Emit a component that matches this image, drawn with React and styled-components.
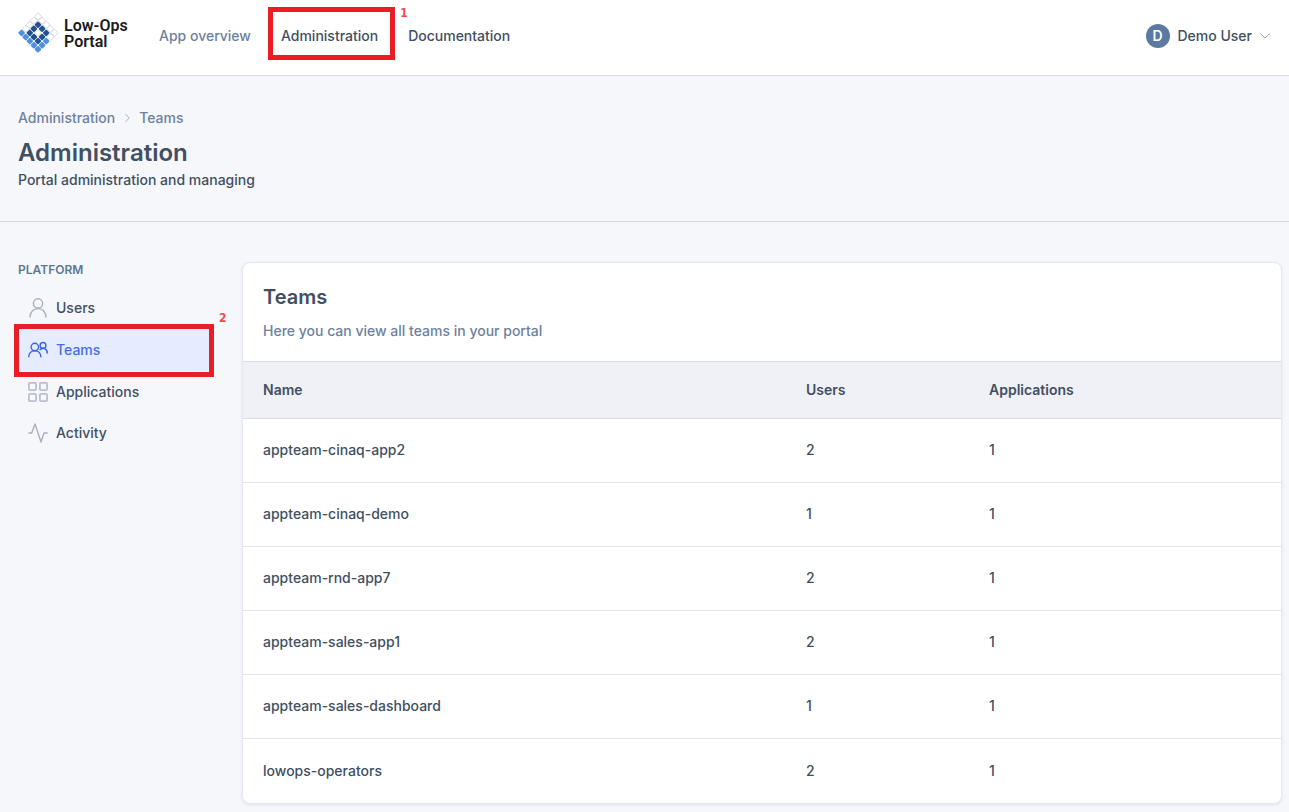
import styled, { createGlobalStyle } from 'styled-components';

const GlobalStyle = createGlobalStyle`
  * {
    box-sizing: border-box;
  }

  body {
    margin: 0;
    background: #f6f7fb;
    color: #414f62;
    font-family: Inter, "Liberation Sans", sans-serif;
    font-size: 14px;
    font-weight: 500;
    line-height: 20px;
  }

  a {
    color: inherit;
    text-decoration: none;
  }
`;

const Header = styled.header`
  display: flex;
  align-items: center;
  height: 76px;
  padding: 0 19px 4px 18px;
  background: #fff;
  border-bottom: 1px solid #d9dce6;
`;

const Brand = styled.a`
  display: flex;
  align-items: center;
  gap: 6px;
  width: 141px;
  padding-bottom: 4px;
  color: #1b1b1d;
  font-family: Roboto, "Liberation Sans", sans-serif;
  font-size: 16px;
  font-weight: 600;
  line-height: 16px;

  > svg {
    margin-top: -2px;
  }
`;

const MainNav = styled.nav`
  display: flex;
  gap: 30px;
`;

const NavLink = styled.a`
  position: relative;
  color: ${(props) => (props.$muted ? '#6d819e' : '#414f62')};
`;

const Callout = styled.span`
  position: absolute;
  inset: ${(props) => props.$inset};
  border: 5px solid #e91d25;
  pointer-events: none;

  > b {
    position: absolute;
    top: ${(props) => props.$labelTop};
    left: calc(100% + 10px);
    color: #ee4a55;
    font-family: "DejaVu Sans Condensed", "DejaVu Sans", sans-serif;
    font-size: 12px;
    font-weight: 700;
    line-height: 12px;
  }
`;

const UserMenu = styled.button`
  display: flex;
  align-items: center;
  gap: 8px;
  margin-left: auto;
  padding: 0;
  border: 0;
  background: none;
  color: inherit;
  font: inherit;
  cursor: pointer;
`;

const Avatar = styled.span`
  width: 24px;
  height: 24px;
  border-radius: 50%;
  background: #5b79a1;
  color: #fff;
  font-weight: 600;
  line-height: 24px;
  text-align: center;
`;

const PageHead = styled.section`
  padding: 32px 18px 31px;
  border-bottom: 1px solid #d6d9e6;

  > h1 {
    margin: 9px 0 1px;
    font-size: 24px;
    font-weight: 600;
    line-height: 32px;
  }

  > p {
    margin: 0;
  }
`;

const Breadcrumbs = styled.nav`
  display: flex;
  align-items: center;
  gap: 8px;
  color: #6d819e;
`;

const Layout = styled.div`
  display: flex;
  align-items: flex-start;
  padding: 40px 7px 9px 18px;
  gap: 33px;
`;

const Sidebar = styled.aside`
  flex: 0 0 191px;

  > h2 {
    margin: 0 0 9px;
    color: #5d7894;
    font-size: 12px;
    font-weight: 600;
    line-height: 16px;
  }

  > nav {
    display: grid;
  }
`;

const SideLink = styled.a`
  position: relative;
  display: flex;
  align-items: center;
  gap: 8px;
  height: ${(props) => (props.$active ? '43px' : '41px')};
  padding: 0 10px;
  border-radius: 4px;
  background: ${(props) => (props.$active ? '#e5ecff' : 'transparent')};
  color: ${(props) => (props.$active ? '#446ce6' : '#414f62')};

  > svg {
    color: ${(props) => (props.$active ? '#3762e4' : '#a9aebd')};
  }
`;

const Card = styled.section`
  flex: 1;
  min-width: 0;
  border: 1px solid #e6e8ef;
  border-radius: 8px;
  background: #fff;
  box-shadow: 0 1px 3px rgba(40, 50, 90, 0.1);
  overflow: hidden;
`;

const CardHead = styled.div`
  padding: 22px 20px 20px;

  > h2 {
    margin: 0 0 12px;
    font-size: 20px;
    font-weight: 600;
    line-height: 24px;
  }

  > p {
    margin: 0;
    color: #6d819e;
  }
`;

const Table = styled.table`
  width: 100%;
  table-layout: fixed;
  border-collapse: separate;
  border-spacing: 0;
  text-align: left;

  th {
    height: 58px;
    padding: 0 20px;
    border-top: 1px solid #d9dce6;
    border-bottom: 1px solid #d9dce6;
    background: #f0f1f7;
    font-weight: 600;
  }

  th:nth-child(2) {
    width: 183px;
  }

  th:nth-child(3) {
    width: 312px;
  }

  td {
    height: 64px;
    padding: 0 20px 1px;
    border-bottom: 1px solid #e2e4e9;
  }

  tr:last-child > td {
    border-bottom: 0;
  }
`;

const teams = [
  { name: 'appteam-cinaq-app2', users: 2, applications: 1 },
  { name: 'appteam-cinaq-demo', users: 1, applications: 1 },
  { name: 'appteam-rnd-app7', users: 2, applications: 1 },
  { name: 'appteam-sales-app1', users: 2, applications: 1 },
  { name: 'appteam-sales-dashboard', users: 1, applications: 1 },
  { name: 'lowops-operators', users: 2, applications: 1 },
];

// w = white, d = dark, l = light; rows run down-left from the top corner
const logoCells = ['wwwww', 'wdddw', 'wdwdl', 'wdddl', 'lllll'];
const logoFill = { w: '#fff', d: '#235291', l: '#4f8fdc' };

const Logo = () => (
  <svg width="40" height="42" viewBox="0 0 40 42" aria-hidden="true">
    <g transform="translate(20 0.4) rotate(45)">
      {logoCells.map((row, y) =>
        row.split('').map((cell, x) => (
          <rect
            key={`${x}-${y}`}
            x={x * 5.8 + 0.3}
            y={y * 5.8 + 0.3}
            width="5.2"
            height="5.2"
            rx="1"
            fill={logoFill[cell]}
            stroke={cell === 'w' ? '#c9ccd0' : 'none'}
            strokeWidth="0.7"
          />
        ))
      )}
    </g>
  </svg>
);

const Icon = ({ children }) => (
  <svg width="20" height="20" viewBox="0 0 20 20" fill="none" stroke="currentColor" strokeWidth="1.4" strokeLinejoin="round" aria-hidden="true">
    {children}
  </svg>
);

const UserIcon = () => (
  <Icon>
    <circle cx="10" cy="5.4" r="4.6" />
    <path d="M2 19.6c0-5.400 3.300-9 8-9s8 3.600 8 9" />
  </Icon>
);

const TeamIcon = () => (
  <Icon>
    <circle cx="6.8" cy="7" r="3.7" />
    <path d="M.7 17.2c0-4 2.500-6.500 6.100-6.500s6.100 2.500 6.100 6.500" />
    <circle cx="15" cy="5.4" r="2.9" />
    <path d="M11.6 10c3.300-3.200 7.700-1.700 7.700 3.400" />
  </Icon>
);

const AppsIcon = () => (
  <Icon>
    <g strokeWidth="1.8" opacity="0.75">
      <rect x=".9" y=".9" width="7.2" height="7.2" rx="1" />
      <rect x="11.9" y=".9" width="7.2" height="7.2" rx="1" />
      <rect x=".9" y="11.9" width="7.2" height="7.2" rx="1" />
      <rect x="11.9" y="11.9" width="7.2" height="7.2" rx="1" />
    </g>
  </Icon>
);

const ActivityIcon = () => (
  <Icon>
    <path d="M.4 10h3.300L7 .9 13 19l3-9h3.600" />
  </Icon>
);

const sideLinks = [
  { label: 'Users', icon: UserIcon },
  { label: 'Teams', icon: TeamIcon, active: true },
  { label: 'Applications', icon: AppsIcon },
  { label: 'Activity', icon: ActivityIcon },
];

export default function App() {
  return (
    <>
      <GlobalStyle />
      <Header>
        <Brand href="#">
          <Logo />
          <span>
            Low-Ops
            <br />
            Portal
          </span>
        </Brand>
        <MainNav>
          <NavLink href="#overview" $muted>App overview</NavLink>
          <NavLink href="#administration">
            Administration
            <Callout $inset="-19px -17px -14px -13px" $labelTop="-5px">
              <b>1</b>
            </Callout>
          </NavLink>
          <NavLink href="#documentation">Documentation</NavLink>
        </MainNav>
        <UserMenu type="button">
          <Avatar>D</Avatar>
          Demo User
          <svg width="10" height="6" viewBox="0 0 10 6" fill="none" stroke="#94a0b2" aria-hidden="true">
            <path d="M.4.5 5 5.1 9.6.5" />
          </svg>
        </UserMenu>
      </Header>

      <PageHead>
        <Breadcrumbs aria-label="Breadcrumb">
          <a href="#administration">Administration</a>
          <svg width="8" height="8" viewBox="0 0 8 8" fill="none" stroke="#a9b3c2" aria-hidden="true">
            <path d="M2.5.2 6.2 4 2.5 7.8" />
          </svg>
          <a href="#teams">Teams</a>
        </Breadcrumbs>
        <h1>Administration</h1>
        <p>Portal administration and managing</p>
      </PageHead>

      <Layout>
        <Sidebar>
          <h2>PLATFORM</h2>
          <nav aria-label="Platform">
            {sideLinks.map(({ label, icon: LinkIcon, active }) => (
              <SideLink key={label} href={`#${label.toLowerCase()}`} $active={active}>
                <LinkIcon />
                {label}
                {active && (
                  <Callout $inset="-4px -5px -6px -4px" $labelTop="-17px">
                    <b>2</b>
                  </Callout>
                )}
              </SideLink>
            ))}
          </nav>
        </Sidebar>

        <Card>
          <CardHead>
            <h2>Teams</h2>
            <p>Here you can view all teams in your portal</p>
          </CardHead>
          <Table>
            <thead>
              <tr>
                <th>Name</th>
                <th>Users</th>
                <th>Applications</th>
              </tr>
            </thead>
            <tbody>
              {teams.map((team) => (
                <tr key={team.name}>
                  <td>{team.name}</td>
                  <td>{team.users}</td>
                  <td>{team.applications}</td>
                </tr>
              ))}
            </tbody>
          </Table>
        </Card>
      </Layout>
    </>
  );
}
